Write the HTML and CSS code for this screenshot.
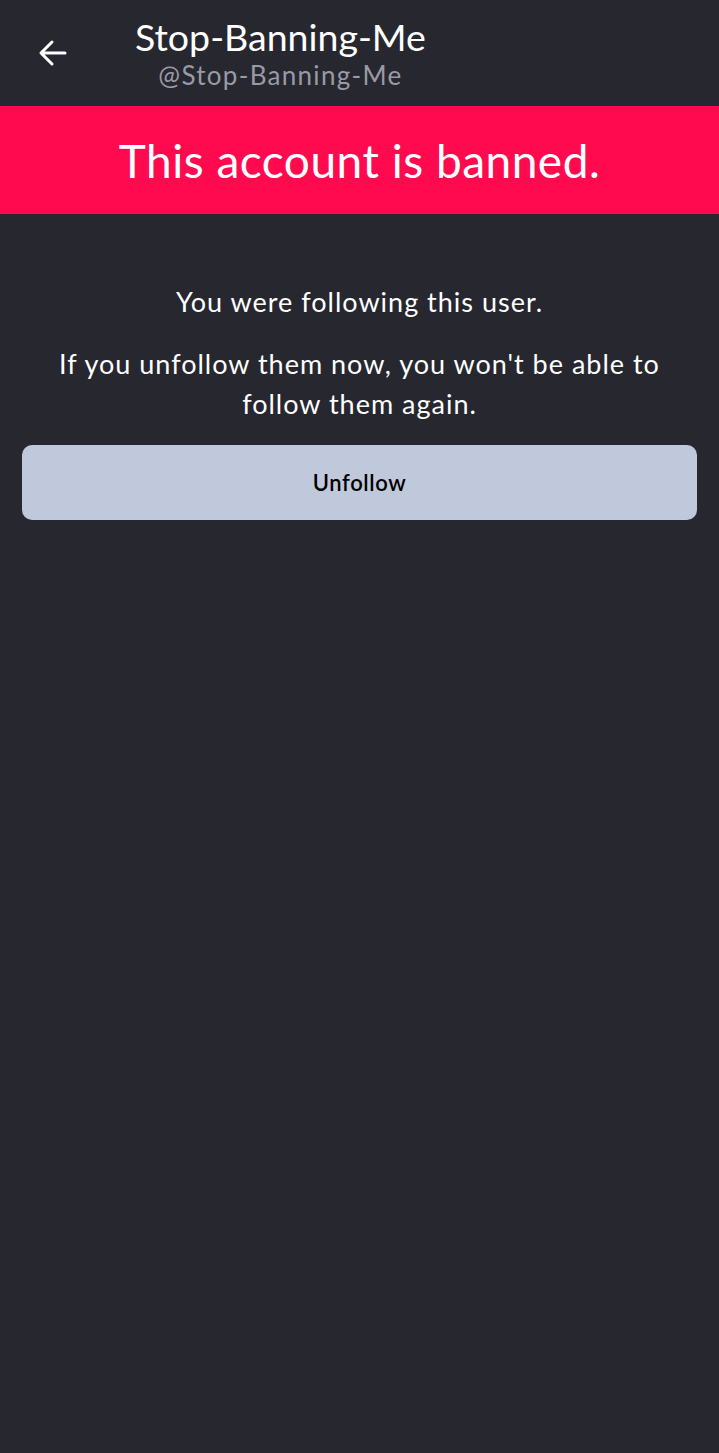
FILE: index.html
```html
<!DOCTYPE html>
<html>
<head>
<meta charset="utf-8">
<link rel="stylesheet" href="styles.css">
</head>
<body>
<div class="app">
  <header class="topbar">
    <div class="back">
      <svg width="32" height="32" viewBox="0 0 32 32"><path d="M28 16H5M15 5L4 16l11 11" fill="none" stroke="#fff" stroke-width="3" stroke-linecap="round" stroke-linejoin="round"/></svg>
    </div>
    <div class="titles">
      <div class="title">Stop-Banning-Me</div>
      <div class="handle">@Stop-Banning-Me</div>
    </div>
  </header>
  <div class="banner">This account is banned.</div>
  <main class="content">
    <p class="msg first">You were following this user.</p>
    <p class="msg">If you unfollow them now, you won't be able to follow them again.</p>
    <button class="unfollow">Unfollow</button>
  </main>
</div>
</body>
</html>
```
FILE: styles.css
```css
html, body { margin: 0; padding: 0; }
body {
  background: #272730;
  font-family: "Lato", "Noto Sans", sans-serif;
  color: #fff;
  width: 719px;
  height: 1453px;
}
.topbar {
  height: 106px;
  display: flex;
  align-items: flex-start;
}
.back {
  width: 135px;
  display: flex;
  padding-left: 37px;
  padding-top: 37px;
  box-sizing: border-box;
}
.titles {
  display: flex;
  flex-direction: column;
  align-items: center;
  padding-top: 15px;
}
.title {
  font-size: 37.5px;
  line-height: 44px;
}
.handle {
  font-size: 26px;
  line-height: 32px;
  color: #9a9aa5;
  letter-spacing: 1.3px;
}
.banner {
  background: #ff0a4e;
  height: 108px;
  display: flex;
  align-items: center;
  justify-content: center;
  font-size: 46px;
  letter-spacing: 0.5px;
}
.content {
  padding: 68px 22px 0;
  display: flex;
  flex-direction: column;
  align-items: stretch;
}
.msg {
  margin: 0;
  text-align: center;
  font-size: 27px;
  line-height: 40px;
  letter-spacing: 1px;
  padding: 0 12px;
}
.msg.first { margin-bottom: 22px; }
.unfollow {
  margin-top: 21px;
  height: 75px;
  border: none;
  border-radius: 10px;
  background: #c0c8db;
  color: #000;
  font-family: "Lato", "Noto Sans", sans-serif;
  font-size: 22px;
  letter-spacing: 0.6px;
  font-weight: 600;
}
```
